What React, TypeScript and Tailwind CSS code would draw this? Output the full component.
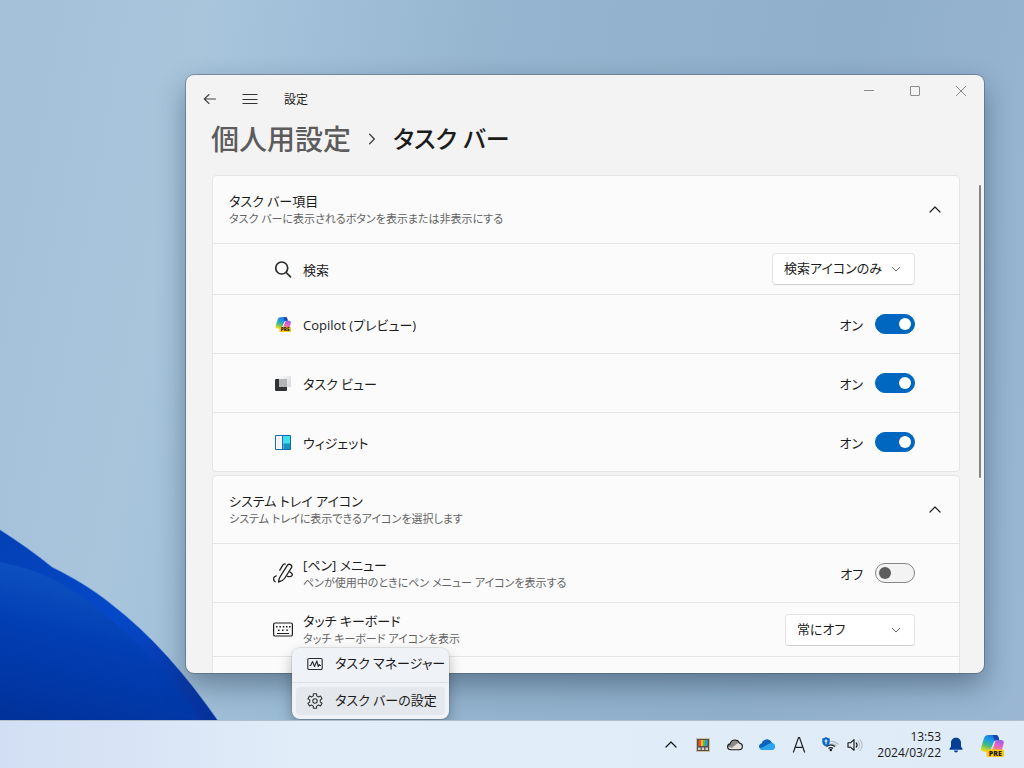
import { useState, type ReactNode } from "react";

const Chevron = ({ dir, className }: { dir: "up" | "down" | "right"; className: string }) => (
  <svg viewBox="0 0 12 12" className={className} fill="none" stroke="currentColor" strokeWidth="1.2" strokeLinecap="round" strokeLinejoin="round" aria-hidden="true">
    <path d={dir === "up" ? "M1 8 6 3l5 5" : dir === "down" ? "M1.5 4 6 8.5 10.5 4" : "M4 2 8 6 4 10"} />
  </svg>
);

const CopilotIcon = ({ id, className }: { id: string; className: string }) => (
  <svg viewBox="0 0 24 24" className={className} aria-hidden="true">
    <defs>
      <linearGradient id={id + "a"} x1="0.7" y1="0" x2="0.3" y2="1">
        <stop offset="0" stopColor="#1a6fd8" />
        <stop offset=".35" stopColor="#1d9be6" />
        <stop offset=".62" stopColor="#3cb88a" />
        <stop offset="1" stopColor="#e8dc1e" />
      </linearGradient>
      <linearGradient id={id + "b"} x1="0.7" y1="0" x2="0.3" y2="1">
        <stop offset="0" stopColor="#9a5cea" />
        <stop offset=".5" stopColor="#e860c8" />
        <stop offset="1" stopColor="#fb9a50" />
      </linearGradient>
    </defs>
    <path d="M11.500 18.500 15 9.500C15.700 7.700 16.600 7 18 7h3c2 0 3.200 1.500 2.600 3.500L21.500 18.500z" fill={`url(#${id}b)`} />
    <path d="M8.500 2h7.300c1.500 0 2.200.7 2.600 2L19.200 7H17.500c-2.100 0-3.200.8-4 2.700L10.500 17c-.3.800-.8 1.300-1.500 1.700H4C1.500 18.700.300 16.800 1 14.500L4 5.300C4.800 3 6.200 2 8.500 2z" fill={`url(#${id}a)`} />
    <path d="M12.500 2h3.300c1.500 0 2.200.7 2.600 2L19.200 7H17.500c-1.100 0-1.900.2-2.600.7z" fill="#1b45b8" />
    <rect x="6.500" y="16.500" width="17.500" height="7.500" rx="1.600" fill="#ffc60a" />
    <text x="15.300" y="22.800" textAnchor="middle" fontFamily="Open Sans, sans-serif" fontSize="7" fontWeight="800" fill="#1c1c1c">PRE</text>
  </svg>
);

const SearchIcon = () => (
  <svg viewBox="0 0 20 20" className="size-5" fill="none" stroke="#2b2b2b" strokeWidth="1.700" strokeLinecap="round" aria-hidden="true">
    <circle cx="8.700" cy="9" r="6" />
    <path d="m13.200 13.500 4.300 4.300" />
  </svg>
);

const TaskViewIcon = () => (
  <svg viewBox="0 0 20 20" className="size-5" aria-hidden="true">
    <defs>
      <linearGradient id="tvLight" x1="0" y1="0" x2="1" y2="1">
        <stop offset="0" stopColor="#fafafa" />
        <stop offset="1" stopColor="#d3d5d8" />
      </linearGradient>
    </defs>
    <rect x="6" y="3" width="12" height="11" rx="1" fill="url(#tvLight)" />
    <rect x="2" y="6" width="12" height="12" rx="1" fill="#303234" />
    <path d="M6 6h8v8H6z" fill="#b4b5b6" />
  </svg>
);

const WidgetsIcon = () => (
  <svg viewBox="0 0 20 20" className="size-5" aria-hidden="true">
    <rect x="2.500" y="3.500" width="15" height="14" rx=".5" fill="#fff" stroke="#0f68b8" />
    <path d="M4 5h4.500v11.500H4z" fill="#f1f3f8" />
    <path d="M9 4h1.500v13.500H9z" fill="#1573c4" />
    <path d="M10.500 4H17V12h-6.500z" fill="#3fe0ea" />
    <path d="M10.500 11.500H17V17h-6.500z" fill="#1595bd" />
    <rect x="2.500" y="3.500" width="15" height="14" rx=".5" fill="none" stroke="#0f68b8" />
  </svg>
);

const PenIcon = () => (
  <svg viewBox="0 0 20 20" className="size-5" fill="none" stroke="#1f1f1f" strokeWidth="1.300" strokeLinecap="round" strokeLinejoin="round" aria-hidden="true">
    <path d="M5.500 19c.2-2 .6-3.500 1.500-5L14.300 2.300c1.800-2.300 5.400-.3 4.200 2.400L11.500 15.500c-1.200 1.700-3.300 3-6 3.500z" />
    <path d="M12.300 1c-1-.3-1.900.2-2.500 1.200L6.800 7.200M3.200 12.800c-3.300.9-3.400 4.600-1 5.900M17 9c1.700 1 2.700 1.800 2.300 3.100-.5 1.400-2.800 1.800-4.800 1.200" />
  </svg>
);

const KeyboardIcon = () => (
  <svg viewBox="0 0 20 20" className="size-5" fill="none" aria-hidden="true">
    <rect x=".6" y="3" width="18.800" height="13" rx="1.600" stroke="#1f1f1f" strokeWidth="1.200" />
    <path d="M3 6h1.500v1.500H3zM6.400 6h1.500v1.500H6.400zM9.800 6h1.500v1.500H9.800zM13 6h1.500v1.500H13zM16 6h1.500v1.500H16zM5 9.500h1.500V11H5zM9 9.500h1.500V11H9zM13.300 9.500h1.500V11h-1.500zM4 13h12v1H4z" fill="#1f1f1f" />
  </svg>
);

const GearIcon = () => {
  const n = 6;
  const pts: string[] = [];
  for (let i = 0; i < n; i++) {
    const a = (i * 2 * Math.PI) / n - Math.PI / 2;
    for (const [da, r] of [[-0.32, 5.4], [-0.22, 7.4], [0.22, 7.4], [0.32, 5.4]]) {
      pts.push(`${(8 + r * Math.cos(a + da)).toFixed(2)} ${(8 + r * Math.sin(a + da)).toFixed(2)}`);
    }
  }
  return (
    <svg viewBox="0 0 16 16" className="size-4" fill="none" stroke="#333" strokeWidth="1.100" strokeLinejoin="round" aria-hidden="true">
      <path d={`M${pts.join("L")}Z`} />
      <circle cx="8" cy="8" r="2.200" />
    </svg>
  );
};

const MonitorIcon = () => (
  <svg viewBox="0 0 16 16" className="size-4" fill="none" stroke="#2b2b2b" strokeWidth="1.100" strokeLinejoin="round" aria-hidden="true">
    <rect x=".8" y="2.500" width="14.400" height="11" rx="1.300" />
    <path d="M2.500 9.500h1.200L5.500 5.500l2 5L9.800 5l1.500 5.500 1-2 .7 1h1" />
  </svg>
);

function Row({ icon, title, desc, htmlFor, compact, children }: { icon: ReactNode; title: string; desc?: string; htmlFor: string; compact?: "sm" | "md"; children: ReactNode }) {
  const height = compact === "sm" ? "min-h-[51px]" : compact === "md" ? "min-h-[54px]" : "min-h-[59px]";
  return (
    <div className={`flex items-center border-t border-[#e5e5e5] pl-[60px] pr-11 ${height}`}>
      <span className="mr-2.5 shrink-0">{icon}</span>
      <label htmlFor={htmlFor} className="flex flex-1 flex-col pt-px">
        <span className="text-[13px] leading-[18px]">{title}</span>
        {desc && <span className="text-[11px] leading-[18px] text-[#636363]">{desc}</span>}
      </label>
      {children}
    </div>
  );
}

function Toggle({ id, initial }: { id: string; initial: boolean }) {
  const [on, setOn] = useState(initial);
  return (
    <div className="flex items-center gap-3">
      <span className="pt-px text-[13px] leading-[18px]">{on ? "オン" : "オフ"}</span>
      <input
        id={id}
        type="checkbox"
        role="switch"
        checked={on}
        onChange={() => setOn(!on)}
        className="flex h-5 w-10 appearance-none items-center rounded-full border border-[#868686] bg-[#f3f3f3] px-[3px] before:size-3 before:rounded-full before:bg-[#5d5d5d] checked:justify-end checked:border-[#0067c0] checked:bg-[#0067c0] checked:before:bg-white"
      />
    </div>
  );
}

function Select({ id, options, width }: { id: string; options: string[]; width: string }) {
  return (
    <div className={`grid items-center ${width}`}>
      <select id={id} className="col-start-1 row-start-1 h-8 w-full appearance-none rounded border border-[#e5e5e5] border-b-[#cfcfcf] bg-white pl-[11px] pr-7 text-[13px]">
        {options.map((o) => (
          <option key={o}>{o}</option>
        ))}
      </select>
      <Chevron dir="down" className="pointer-events-none col-start-1 row-start-1 mr-[14px] size-2.5 justify-self-end text-[#666]" />
    </div>
  );
}

function Card({ title, desc, children }: { title: string; desc: string; children: ReactNode }) {
  return (
    <section className="shrink-0 rounded border border-[#e5e5e5] bg-[#fbfbfb]">
      <button type="button" aria-expanded="true" className="flex min-h-[67px] w-full items-center justify-between px-4 text-left">
        <span className="flex flex-col pt-px">
          <span className="text-[13px] leading-[18px]">{title}</span>
          <span className="text-[11px] leading-[18px] text-[#636363]">{desc}</span>
        </span>
        <span className="flex w-4 justify-center">
          <Chevron dir="up" className="size-3 text-[#222]" />
        </span>
      </button>
      {children}
    </section>
  );
}

function SettingsWindow() {
  return (
    <div className="absolute bottom-[47px] left-[186px] right-10 top-[75px] flex flex-col overflow-hidden rounded-lg bg-[#f3f3f3] shadow-[0_0_0_1px_rgba(70,85,100,0.45),0_12px_28px_rgba(20,40,60,0.42)]">
      <header className="flex h-12 shrink-0 justify-between">
        <div className="flex items-center pl-4">
          <button type="button" aria-label="戻る">
            <svg viewBox="0 0 16 16" className="size-4" fill="none" stroke="#444" strokeWidth="1.100" strokeLinecap="round" strokeLinejoin="round">
              <path d="M13.500 8h-11M7 3.500 2.300 8 7 12.500" />
            </svg>
          </button>
          <button type="button" aria-label="メニュー" className="ml-6">
            <svg viewBox="0 0 16 16" className="size-4" fill="none" stroke="#333">
              <path d="M.5 3.500h15M.5 8.500h15M.5 12.500h15" />
            </svg>
          </button>
          <span className="ml-[26px] pt-px text-xs">設定</span>
        </div>
        <div className="flex h-8 text-[#8c8c8c]">
          <button type="button" aria-label="最小化" className="flex w-[46px] items-center justify-center">
            <svg viewBox="0 0 12 12" className="size-3" fill="none" stroke="currentColor"><path d="M1 5.500h10" /></svg>
          </button>
          <button type="button" aria-label="最大化" className="flex w-[46px] items-center justify-center">
            <svg viewBox="0 0 12 12" className="size-3" fill="none" stroke="currentColor"><rect x="1.500" y="1.500" width="9" height="9" rx=".5" /></svg>
          </button>
          <button type="button" aria-label="閉じる" className="flex w-[46px] items-center justify-center">
            <svg viewBox="0 0 12 12" className="size-3" fill="none" stroke="currentColor"><path d="m1 1 10 10M11 1 1 11" /></svg>
          </button>
        </div>
      </header>
      <h1 className="flex shrink-0 items-center pl-[25px] font-medium leading-8">
        <a href="#personalization" className="text-[28px] text-[#5c5c5c]">個人用設定</a>
        <Chevron dir="right" className="mx-3.5 size-3.5 text-[#444]" />
        <span className="text-2xl leading-8">タスク バー</span>
      </h1>
      <div className="mt-5 flex min-h-0 flex-1 overflow-hidden pl-[26px]">
        <main className="flex min-w-0 flex-1 flex-col gap-[3px]">
          <Card title="タスク バー項目" desc="タスク バーに表示されるボタンを表示または非表示にする">
            <Row icon={<SearchIcon />} title="検索" htmlFor="search" compact="sm">
              <Select id="search" options={["検索アイコンのみ"]} width="w-[143px]" />
            </Row>
            <Row icon={<CopilotIcon id="cs" className="mx-0.5 size-4" />} title="Copilot (プレビュー)" htmlFor="copilot">
              <Toggle id="copilot" initial />
            </Row>
            <Row icon={<TaskViewIcon />} title="タスク ビュー" htmlFor="taskview">
              <Toggle id="taskview" initial />
            </Row>
            <Row icon={<WidgetsIcon />} title="ウィジェット" htmlFor="widgets">
              <Toggle id="widgets" initial />
            </Row>
          </Card>
          <Card title="システム トレイ アイコン" desc="システム トレイに表示できるアイコンを選択します">
            <Row icon={<PenIcon />} title="[ペン] メニュー" desc="ペンが使用中のときにペン メニュー アイコンを表示する" htmlFor="pen">
              <Toggle id="pen" initial={false} />
            </Row>
            <Row icon={<KeyboardIcon />} title="タッチ キーボード" desc="タッチ キーボード アイコンを表示" htmlFor="keyboard" compact="md">
              <Select id="keyboard" options={["常にオフ"]} width="w-[130px]" />
            </Row>
            <div className="min-h-[54px] border-t border-[#e5e5e5]" />
          </Card>
        </main>
        <div className="flex w-6 shrink-0 justify-end pr-[3px] pt-2.5">
          <div className="h-3/5 w-0.5 rounded-full bg-[#858585]" />
        </div>
      </div>
    </div>
  );
}

function ContextMenu() {
  return (
    <div role="menu" className="absolute bottom-px left-[292px] flex min-w-[155px] flex-col rounded-lg bg-[#eff3f8] text-[13px] shadow-[0_0_0_1px_rgba(0,0,0,0.08),0_6px_14px_rgba(0,0,0,0.28)]">
      <div className="border-b border-[#dde1e5] px-1 pb-1 pt-0.5">
        <button type="button" role="menuitem" className="flex h-7 w-full items-center gap-3 whitespace-nowrap rounded pl-[11px]">
          <MonitorIcon />
          タスク マネージャー
        </button>
      </div>
      <div className="p-1">
        <button type="button" role="menuitem" className="flex h-7 w-full items-center gap-3 whitespace-nowrap rounded bg-[#e4e8ec] pl-[11px]">
          <GearIcon />
          タスク バーの設定
        </button>
      </div>
    </div>
  );
}

function Taskbar() {
  return (
    <footer className="relative flex h-12 shrink-0 items-center justify-end border-t border-[#b5bec8] bg-linear-to-r from-[#d2def3] via-[#e1edf8] via-30% to-[#dfebf7] pr-5">
      <div className="flex items-center">
        <button type="button" aria-label="隠れているインジケーター" className="flex w-8 justify-center">
          <Chevron dir="up" className="size-3 text-[#111]" />
        </button>
        <button type="button" aria-label="PowerToys" className="flex w-8 justify-center">
          <svg viewBox="0 0 14 14" className="size-3.5">
            <path d="M0 0h14v14H0z" fill="#cdbf9c" />
            <path d="M1 1h12v12H1z" fill="#55504f" />
            <path d="M2.500 2H5v6H2.500z" fill="#f2502a" />
            <path d="M5 2h2v6H5z" fill="#fbb81c" />
            <path d="M7 2h2.200v6H7z" fill="#5cc02d" />
            <path d="M9.200 2h2.300v6H9.200z" fill="#24a5ee" />
            <path d="M2 9.500h2.500V12H2zM5.700 9.500h2.500V12H5.700zM9.500 9.500H12V12H9.500z" fill="#d4d0cc" />
          </svg>
        </button>
        <button type="button" aria-label="OneDrive" className="flex w-8 justify-center">
          <svg viewBox="0 0 16 12" className="h-3 w-4">
            <path d="M4 10.800C1.900 10.800.6 9.500.6 7.800c0-1.600 1.100-2.700 2.600-2.900C3.700 2.500 5.600 1 8 1c2.200 0 3.700 1.200 4.400 3.100 1.800.2 3 1.500 3 3.200 0 2-1.300 3.500-3.200 3.500z" fill="#e2e2e2" />
            <path d="M3.200 4.900C3.700 2.500 5.600 1 8 1c2.200 0 3.700 1.200 4.400 3.100-1.500 0-2.600.6-3.400 1.500L5 8.800.8 8c-.2-1.800 1-2.900 2.400-3.100z" fill="#8a8a8a" />
            <path d="M4 10.800C1.900 10.800.6 9.500.6 7.800c0-1.600 1.100-2.700 2.600-2.900C3.700 2.500 5.600 1 8 1c2.200 0 3.700 1.200 4.400 3.100 1.800.2 3 1.500 3 3.200 0 2-1.300 3.500-3.200 3.500z" fill="none" stroke="#1a1a1a" strokeWidth="1.100" />
          </svg>
        </button>
        <button type="button" aria-label="OneDrive for Business" className="flex w-8 justify-center">
          <svg viewBox="0 0 16 12" className="h-3 w-4">
            <path d="M4 11C1.500 11 0 9.500 0 7.600c0-1.700 1.200-3 2.900-3.200C3.500 2 5.500.5 8 .5c2.300 0 4 1.300 4.700 3.300 1.900.3 3.300 1.600 3.300 3.600 0 2.100-1.400 3.600-3.400 3.600z" fill="#1591e6" />
            <path d="M2.900 4.400C3.500 2 5.500.5 8 .5c2.300 0 4 1.300 4.700 3.300-1.300.1-2.400.6-3.200 1.500L5 9 .2 8C0 6 1.200 4.600 2.900 4.400z" fill="#0a62bb" />
            <path d="M1.200 9.800 9 5.200c2-1.100 5.600-1 6.500 1 1 2.600-.6 4.800-2.900 4.800H4c-1.200 0-2.200-.4-2.800-1.200z" fill="#28a4f0" />
          </svg>
        </button>
        <button type="button" aria-label="英数字入力" className="flex w-8 justify-center">
          <svg viewBox="0 0 16 16" className="size-4" fill="none" stroke="#222" strokeWidth="1.200"><path d="M2.300 15.500 7.500.6h1l5.200 14.900M4.200 10.300h7.600" /></svg>
        </button>
        <button type="button" aria-label="ネットワークと音量" className="flex items-center gap-2 pl-[7px]">
          <svg viewBox="0 0 17 16" className="h-4 w-[17px]" fill="none">
            <path d="M7.500 4.500c3.300-.6 6.700.5 9 3M8.500 7c2.200-.4 4.300.3 5.900 2" stroke="#b5bdc5" strokeWidth="1.200" />
            <path d="M4.500 9.500c3-2.500 5.500-2.400 8.500 0M6.500 11.500c1.600-1.300 3-1.300 4.600 0" stroke="#222" strokeWidth="1.200" />
            <circle cx="8.800" cy="13" r="1.200" fill="#111" />
            <path d="M4 0c1.100.9 2.200 1.200 3.700 1.300v3.500C7.700 7.200 6.200 8.700 4 9.500 1.800 8.700.3 7.200.3 4.800V1.300C1.800 1.200 2.900.9 4 0z" fill="#0b68c4" />
            <path d="M4 2.300v5M2.500 4h3" stroke="#fff" />
          </svg>
          <svg viewBox="0 0 16 16" className="size-4" fill="none" strokeWidth="1.100" strokeLinecap="round" strokeLinejoin="round">
            <path d="M1 5.800h2.500L7 2.700v10.600l-3.500-3.100H1z" stroke="#111" />
            <path d="M9.200 5.800c1.100 1.300 1.100 3.100 0 4.400" stroke="#111" />
            <path d="M11 4c2 2.500 2 5.500 0 8M13 2.500c2.600 3.300 2.600 7.700 0 11" stroke="#b5bdc5" />
          </svg>
        </button>
      </div>
      <button type="button" className="ml-3.5 flex flex-col text-right text-xs leading-4 text-[#1a1a1a]">
        <span className="w-full">13:53</span>
        <span>2024/03/22</span>
      </button>
      <button type="button" aria-label="通知" className="ml-2">
        <svg viewBox="0 0 14 16" className="h-4 w-3.5" fill="#063f96">
          <path d="M7 .8c3 0 5 2.100 5 5v3.700l1.500 2.300c.2.500 0 1-.600 1H1.100c-.600 0-.800-.500-.600-1L2 9.500V5.800c0-2.900 2-5 5-5zM4.800 13.500h4.400c-.3 1.300-1.100 2-2.200 2s-1.900-.7-2.200-2z" />
        </svg>
      </button>
      <button type="button" aria-label="Copilot" className="ml-[17px]">
        <CopilotIcon id="ct" className="size-6" />
      </button>
    </footer>
  );
}

export default function App() {
  return (
    <div className="flex h-screen min-h-[600px] flex-col overflow-hidden font-['Open_Sans','Noto_Sans_CJK_JP',sans-serif] text-[#1b1b1b] [font-feature-settings:'palt']">
      <div className="relative flex-1 bg-[linear-gradient(100deg,#a3c0d8_0%,#a8c5dc_18%,#94b4cf_45%,#8fafcb_75%,#9ab6d3_100%)]">
        <svg viewBox="0 0 220 192" className="absolute bottom-0 left-0 h-[192px] w-[220px]" aria-hidden="true">
          <defs>
            <linearGradient id="petal" x1="0.5" y1="0" x2="0.2" y2="1">
              <stop offset="0" stopColor="#1156c4" />
              <stop offset=".45" stopColor="#023fb5" />
              <stop offset="1" stopColor="#01329c" />
            </linearGradient>
            <linearGradient id="petalBack" x1="0" y1="0" x2="1" y2="1">
              <stop offset="0" stopColor="#0340b5" />
              <stop offset=".5" stopColor="#0548c8" />
              <stop offset="1" stopColor="#07309a" />
            </linearGradient>
          </defs>
          <path d="M-2 .5C18 13 36 26 52 39c22 11 39 21 58 36 42 32 77 73 109 119H-2z" fill="url(#petalBack)" stroke="#6ba1dc" strokeWidth=".7" />
          <path d="M0 34c36 7 64 20 96 45 43 34 78 74 104 113H0z" fill="url(#petal)" />
        </svg>
        <SettingsWindow />
        <ContextMenu />
      </div>
      <Taskbar />
    </div>
  );
}
